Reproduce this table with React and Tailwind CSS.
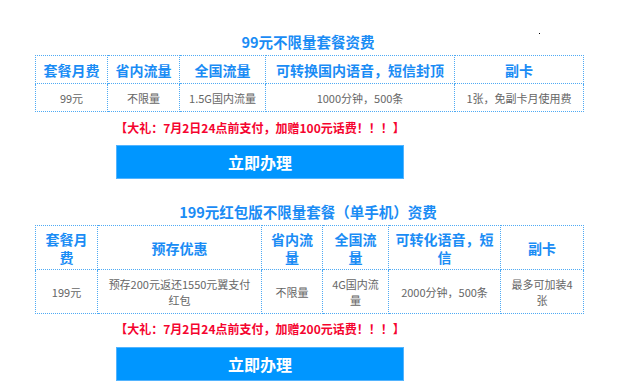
import React from "react";

const font = { fontFamily: '"Noto Sans CJK SC", "Noto Sans", sans-serif' };

const th = "border border-dotted border-[#4eaaf4] text-[#1a8cf5] font-bold text-[14px] leading-[18px] text-center align-middle p-0";
const td = "border border-dotted border-[#4eaaf4] text-[#666] text-[11px] leading-[16px] text-center align-middle p-0";

function Promo({ amount }) {
  return (
    <div className="w-[520px] text-center text-[#f5042f] font-bold text-[12px] leading-[18px]">
      【大礼：7月2日24点前支付，加赠{amount}元话费！！！】
    </div>
  );
}

function Btn({ mt }) {
  return (
    <div className={"w-[520px] flex justify-center " + mt}>
      <div className="w-[288px] h-[34px] bg-[#0096ff] border border-[#52b4ff] flex items-center justify-center text-white font-bold text-[16px]">
        立即办理
      </div>
    </div>
  );
}

export default function App() {
  return (
    <div className="relative w-[620px] h-[383px] bg-white overflow-hidden" style={font}>
      <div className="pt-[32px]">
        <div className="w-[616px] text-center text-[#1a8cf5] font-bold text-[14.5px] leading-[20px]">
          99元不限量套餐资费
        </div>
        <div className="pl-[35px] mt-[3px]">
          <table className="table-fixed border-collapse w-[548px]">
            <colgroup>
              <col className="w-[72px]" />
              <col className="w-[72px]" />
              <col className="w-[86px]" />
              <col className="w-[189px]" />
              <col className="w-[129px]" />
            </colgroup>
            <tbody>
              <tr className="h-[28px]">
                <td className={th}>套餐月费</td>
                <td className={th}>省内流量</td>
                <td className={th}>全国流量</td>
                <td className={th}>可转换国内语音，短信封顶</td>
                <td className={th}>副卡</td>
              </tr>
              <tr className="h-[28px]">
                <td className={td}>99元</td>
                <td className={td}>不限量</td>
                <td className={td}>1.5G国内流量</td>
                <td className={td}>1000分钟，500条</td>
                <td className={td}>1张，免副卡月使用费</td>
              </tr>
            </tbody>
          </table>
        </div>
        <div className="mt-[7px]">
          <Promo amount="100" />
        </div>
        <Btn mt="mt-[8px]" />
        <div className="mt-[23px] w-[616px] text-center text-[#1a8cf5] font-bold text-[14.5px] leading-[20px]">
          199元红包版不限量套餐（单手机）资费
        </div>
        <div className="pl-[35px] mt-[3px]">
          <table className="table-fixed border-collapse w-[548px]">
            <colgroup>
              <col className="w-[62px]" />
              <col className="w-[164px]" />
              <col className="w-[61px]" />
              <col className="w-[66px]" />
              <col className="w-[112px]" />
              <col className="w-[83px]" />
            </colgroup>
            <tbody>
              <tr className="h-[44px]">
                <td className={th}>套餐月<br />费</td>
                <td className={th}>预存优惠</td>
                <td className={th}>省内流<br />量</td>
                <td className={th}>全国流<br />量</td>
                <td className={th}>可转化语音，短<br />信</td>
                <td className={th}>副卡</td>
              </tr>
              <tr className="h-[44px]">
                <td className={td}>199元</td>
                <td className={td}>预存200元返还1550元翼支付<br />红包</td>
                <td className={td}>不限量</td>
                <td className={td}>4G国内流<br />量</td>
                <td className={td}>2000分钟，500条</td>
                <td className={td}>最多可加装4<br />张</td>
              </tr>
            </tbody>
          </table>
        </div>
        <div className="mt-[6px]">
          <Promo amount="200" />
        </div>
        <Btn mt="mt-[9px]" />
      </div>
      <div className="absolute left-[539px] top-[33px] w-[1px] h-[1px] bg-black" />
    </div>
  );
}
